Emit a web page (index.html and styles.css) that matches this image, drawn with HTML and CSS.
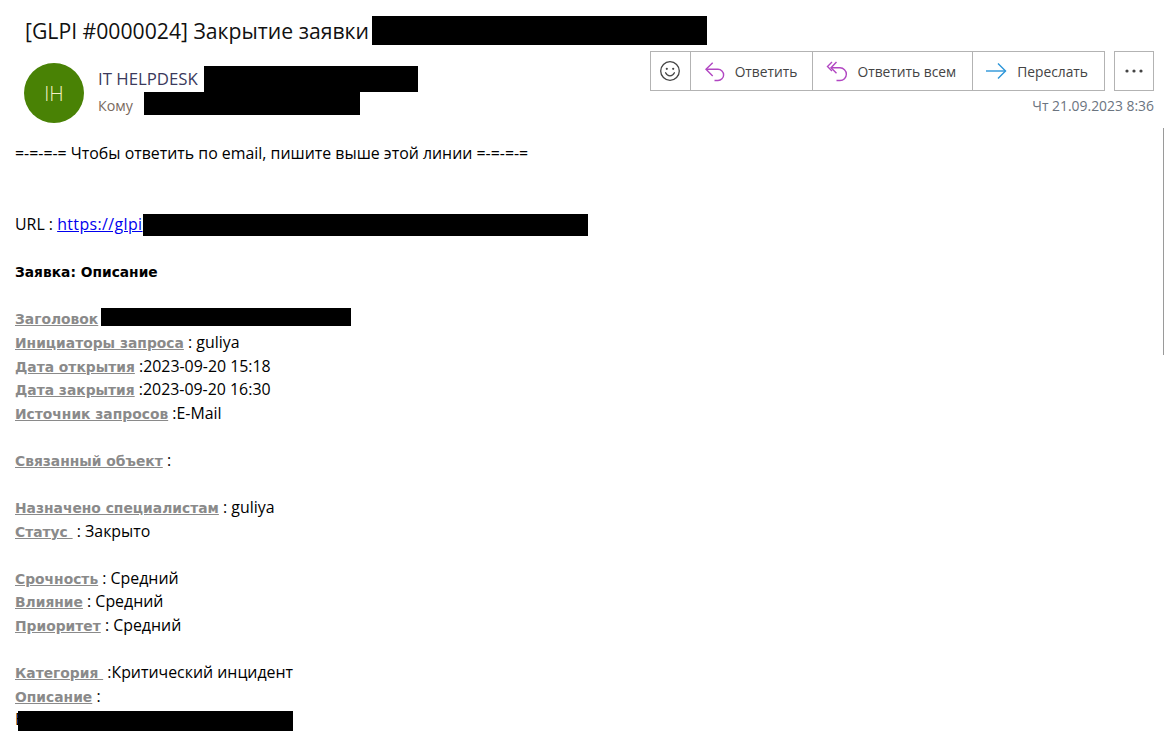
FILE: index.html
```html
<!DOCTYPE html>
<html lang="ru">
<head>
<meta charset="utf-8">
<title>Закрытие заявки</title>
<link rel="stylesheet" href="styles.css">
</head>
<body>
<header class="head">
  <h1 class="subject"><span>[GLPI #0000024] Закрытие заявки</span><span class="redact r-subject"></span></h1>
  <div class="meta">
    <div class="sender">
      <div class="avatar">IH</div>
      <div class="who">
        <div class="name"><span>IT HELPDESK</span><span class="redact r-name"></span></div>
        <div class="to"><span>Кому</span><span class="redact r-to"></span></div>
      </div>
    </div>
    <div class="side">
      <div class="actions">
        <div class="group">
          <button class="btn emoji"><svg width="22" height="22" viewBox="0 0 22 22" fill="none" stroke="#444" stroke-width="1.3"><circle cx="11" cy="11" r="9.300"/><circle cx="7.800" cy="8.800" r="1.100" fill="#444" stroke="none"/><circle cx="14.200" cy="8.800" r="1.100" fill="#444" stroke="none"/><path d="M6.600 12.800c1 2 2.600 3 4.400 3s3.400-1 4.400-3" stroke-linecap="round"/></svg></button>
          <button class="btn reply"><svg width="22" height="22" viewBox="0 0 22 22" fill="none" stroke="#b146c2" stroke-width="1.400"><path d="M8.700 2.700 2 9.300l6.700 6.700"/><path d="M2 9.300h12a5.600 5.600 0 0 1 0 11.200h-3.500"/></svg><span>Ответить</span></button>
          <button class="btn"><svg width="22" height="22" viewBox="0 0 22 22" fill="none" stroke="#b146c2" stroke-width="1.400"><path d="M6 2 1.500 6.500 6 11"/><path d="M10.500 2 5 7.800l5.500 5.500"/><path d="M5 7.800h9a5.600 5.600 0 0 1 0 12.700h-3.500"/></svg><span>Ответить всем</span></button>
          <button class="btn"><svg width="22" height="22" viewBox="0 0 22 22" fill="none" stroke="#2b95d8" stroke-width="1.400"><path d="M0 11h19.500"/><path d="M12 3.500l7.500 7.500-7.500 7.500"/></svg><span>Переслать</span></button>
        </div>
        <button class="btn more" aria-label="Ещё"><svg width="20" height="6" viewBox="0 0 20 6" fill="#444"><circle cx="3" cy="3" r="1.600"/><circle cx="10" cy="3" r="1.600"/><circle cx="17" cy="3" r="1.600"/></svg></button>
      </div>
      <div class="date">Чт 21.09.2023 8:36</div>
    </div>
  </div>
</header>
<main class="body">
  <p class="line">=-=-=-= Чтобы ответить по email, пишите выше этой линии =-=-=-=</p>
  <p class="line"></p>
  <p class="line"></p>
  <p class="line url">URL : <a href="#">https://glpi</a><span class="redact r-url"></span></p>
  <p class="line"></p>
  <p class="line"><strong class="heading">Заявка: Описание</strong></p>
  <p class="line"></p>
  <p class="line"><u class="label">Заголовок</u> <span class="redact r-title"></span></p>
  <p class="line"><u class="label">Инициаторы запроса</u> : guliya</p>
  <p class="line"><u class="label">Дата открытия</u> :2023-09-20 15:18</p>
  <p class="line"><u class="label">Дата закрытия</u> :2023-09-20 16:30</p>
  <p class="line"><u class="label">Источник запросов</u> :E-Mail</p>
  <p class="line"></p>
  <p class="line"><u class="label">Связанный объект</u> :</p>
  <p class="line"></p>
  <p class="line"><u class="label">Назначено специалистам</u> : guliya</p>
  <p class="line"><u class="label">Статус&nbsp;</u> : Закрыто</p>
  <p class="line"></p>
  <p class="line"><u class="label">Срочность</u> : Средний</p>
  <p class="line"><u class="label">Влияние</u> : Средний</p>
  <p class="line"><u class="label">Приоритет</u> : Средний</p>
  <p class="line"></p>
  <p class="line"><u class="label">Категория&nbsp;</u> :Критический инцидент</p>
  <p class="line"><u class="label">Описание</u> :</p>
  <p class="line">Б<span class="redact r-desc"></span></p>
</main>
<div class="scrollbar"></div>
</body>
</html>
```

FILE: styles.css
```css
* { box-sizing: border-box; }
html, body { height: 100%; }
body {
  margin: 0;
  background: #fff;
  color: #000;
  font-family: "Open Sans", "Noto Sans", sans-serif;
  overflow: hidden;
  position: relative;
}
.redact { display: inline-block; background: #000; vertical-align: top; }
.head { padding: 16px 10px 0 24px; height: 128px; }
.subject {
  margin: 0;
  height: 29px;
  display: flex;
  font-size: 21.200px;
  font-weight: 400;
  line-height: 29px;
  color: #111;
  padding-left: 1px;
}
.r-subject { width: 335px; height: 29px; margin-left: 3px; }
.meta { display: flex; justify-content: space-between; margin-top: 6px; }
.sender { display: flex; margin-top: 12px; }
.avatar {
  width: 60px;
  height: 60px;
  border-radius: 50%;
  background: #498205;
  color: #f6f0c4;
  font-size: 20px;
  font-weight: 300;
  display: flex;
  align-items: center;
  justify-content: center;
}
.who { margin-left: 14px; margin-top: 3px; }
.name { display: flex; height: 26px; font-size: 16.800px; line-height: 26px; color: #3b3a5c; }
.r-name { width: 214px; height: 26px; margin-left: 6px; }
.to { display: flex; height: 23px; font-size: 14.300px; line-height: 27px; color: #7a6a60; }
.r-to { width: 216px; height: 23px; margin-left: 11px; }
.side { display: flex; flex-direction: column; align-items: flex-end; }
.actions { display: flex; gap: 9px; }
.group { display: flex; border: 1px solid #b3b3b3; height: 40px; }
.btn {
  height: 38px;
  padding: 0 16px 0 13px;
  display: flex;
  align-items: center;
  gap: 9px;
  background: #fff;
  border: 0;
  border-left: 1px solid #b3b3b3;
  font: 13.800px "Open Sans", "Noto Sans", sans-serif;
  color: #444;
}
.group .btn:first-child { border-left: 0; }
.reply { padding-right: 15px; }
.emoji { width: 39px; padding: 0; justify-content: center; }
.more { width: 40px; height: 40px; padding: 0; justify-content: center; border: 1px solid #b3b3b3; }
.date { margin-top: 5px; font-size: 13.900px; line-height: 20px; color: #6b7480; }
.body { padding: 14.200px 0 0 15px; font-size: 15.900px; }
.line { margin: 0; height: 23.600px; line-height: 23.600px; white-space: nowrap; }
.line a { color: #0000ee; letter-spacing: 0.400px; }
.heading { font-family: "DejaVu Sans", Verdana, sans-serif; font-size: 13.800px; font-weight: 700; }
.label { font-family: "DejaVu Sans", Verdana, sans-serif; font-size: 13.850px; font-weight: 700; color: #8a8a8a; }
.r-url { width: 445px; height: 22px; margin-top: 1px; }
.r-title { width: 250px; height: 18px; margin-top: 1px; margin-left: -1px; }
.r-desc { width: 275px; height: 21px; margin-left: -7px; margin-top: 3px; }
.scrollbar {
  position: absolute;
  top: 128px;
  right: 0;
  width: 1px;
  height: 227px;
  background: #9a9a9a;
}
```
